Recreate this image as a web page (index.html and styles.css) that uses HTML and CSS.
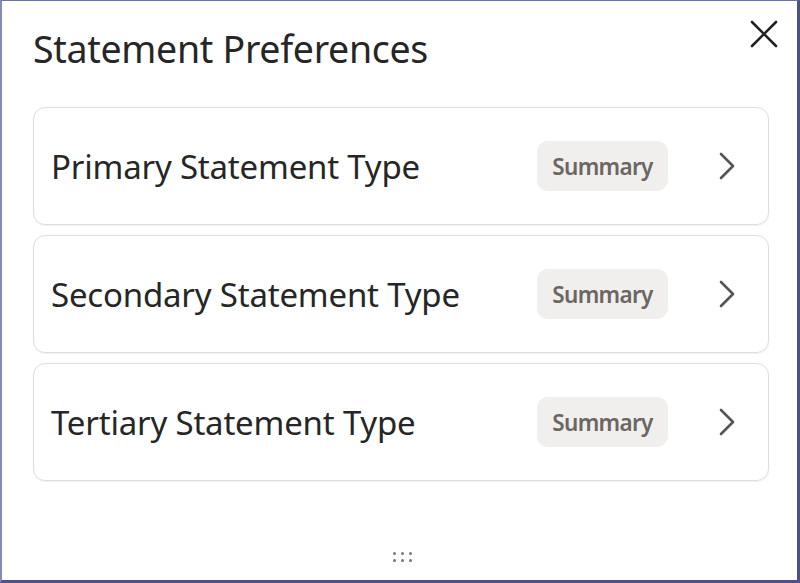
FILE: index.html
```html
<!DOCTYPE html>
<html lang="en">
<head>
<meta charset="utf-8">
<title>Statement Preferences</title>
<link rel="stylesheet" href="styles.css">
</head>
<body>
<div class="dialog">
  <header class="dialog-header">
    <h1 class="dialog-title">Statement Preferences</h1>
    <button class="close-btn" aria-label="Close">
      <svg viewBox="0 0 28 28" width="28" height="28"><path d="M2 2 L26 26 M26 2 L2 26" stroke="#222" stroke-width="2.6" fill="none" stroke-linecap="round"/></svg>
    </button>
  </header>
  <ul class="pref-list">
    <li class="pref-item">
      <span class="pref-label">Primary Statement Type</span>
      <span class="badge">Summary</span>
      <svg class="chevron" viewBox="0 0 16 28" width="16" height="28"><path d="M2 2 L14 14 L2 26" stroke="#555" stroke-width="2.6" fill="none" stroke-linecap="round" stroke-linejoin="round"/></svg>
    </li>
    <li class="pref-item">
      <span class="pref-label">Secondary Statement Type</span>
      <span class="badge">Summary</span>
      <svg class="chevron" viewBox="0 0 16 28" width="16" height="28"><path d="M2 2 L14 14 L2 26" stroke="#555" stroke-width="2.6" fill="none" stroke-linecap="round" stroke-linejoin="round"/></svg>
    </li>
    <li class="pref-item">
      <span class="pref-label">Tertiary Statement Type</span>
      <span class="badge">Summary</span>
      <svg class="chevron" viewBox="0 0 16 28" width="16" height="28"><path d="M2 2 L14 14 L2 26" stroke="#555" stroke-width="2.6" fill="none" stroke-linecap="round" stroke-linejoin="round"/></svg>
    </li>
  </ul>
  <footer class="dialog-footer">
    <span class="grip"><i></i><i></i><i></i><i></i><i></i><i></i></span>
  </footer>
</div>
</body>
</html>
```

FILE: styles.css
```css
html, body {
  margin: 0;
  padding: 0;
}
body {
  width: 800px;
  height: 583px;
  box-sizing: border-box;
  background: #fff;
  border-left: 2px solid #868bb3;
  border-top: 1px solid #6e739e;
  border-right: 3px solid #4d5282;
  border-bottom: 3px solid #4d5282;
  font-family: "Noto Sans", "Open Sans", sans-serif;
  color: #222;
  overflow: hidden;
}
.dialog {
  height: 100%;
  display: flex;
  flex-direction: column;
  padding: 0 28px 0 31px;
  box-sizing: border-box;
}
.dialog-header {
  display: flex;
  justify-content: space-between;
  align-items: flex-start;
  height: 106px;
}
.dialog-title {
  margin: 22px 0 0 0;
  font-size: 37.5px;
  line-height: 52px;
  font-weight: 400;
  color: #262626;
  letter-spacing: -0.3px;
}
.close-btn {
  margin: 19px -9px 0 0;
  padding: 0;
  border: 0;
  background: none;
  width: 28px;
  height: 28px;
  display: flex;
}
.pref-list {
  list-style: none;
  margin: 0;
  padding: 0;
  display: flex;
  flex-direction: column;
  gap: 10px;
}
.pref-item {
  height: 118px;
  box-sizing: border-box;
  border: 1.5px solid #dedede;
  border-radius: 12px;
  box-shadow: 0 1px 1px rgba(0,0,0,0.06);
  display: flex;
  align-items: center;
  padding: 0 33px 0 17px;
}
.pref-label {
  flex: 1;
  font-size: 33px;
  color: #262626;
  letter-spacing: -0.2px;
}
.badge {
  width: 131px;
  height: 50px;
  box-sizing: border-box;
  border-radius: 11px;
  background: #f1efed;
  color: #6b6662;
  font-size: 22.5px;
  font-weight: 600;
  display: flex;
  align-items: center;
  justify-content: center;
  letter-spacing: -0.7px;
  margin-right: 51px;
}
.chevron {
  display: block;
}
.dialog-footer {
  margin-top: auto;
  height: 28px;
  display: flex;
  justify-content: center;
  align-items: flex-start;
}
.grip {
  display: grid;
  grid-template-columns: repeat(3, 3px);
  gap: 4px 5px;
  margin-left: 2px;
}
.grip i {
  width: 3px;
  height: 3px;
  border-radius: 50%;
  background: #777;
}
```
